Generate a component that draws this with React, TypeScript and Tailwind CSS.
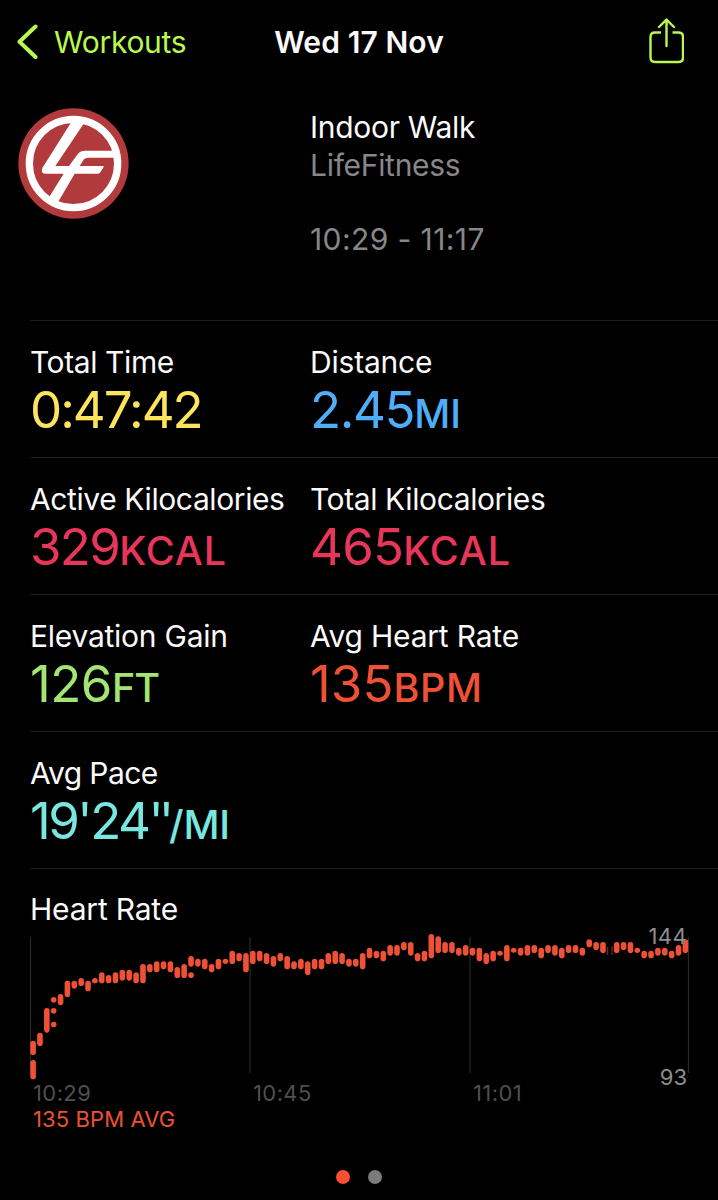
import type { ReactNode } from "react";

// [slot, top, bottom], three units to a pixel
const BARS: [number, number, number][] = [
  [0, 362, 405], [0, 420, 478], [1, 338, 378], [2, 264, 338], [3, 231, 248], [3, 264, 281], [3, 305, 322],
  [4, 222, 255], [5, 182, 231], [6, 182, 206], [7, 174, 198], [8, 182, 214], [9, 174, 190], [10, 157, 190],
  [11, 165, 190], [12, 157, 190], [13, 149, 182], [14, 149, 182], [15, 157, 190], [16, 132, 190], [17, 132, 157],
  [18, 124, 157], [19, 124, 148], [20, 124, 157], [21, 141, 174], [22, 132, 174], [23, 108, 140], [23, 157, 174],
  [24, 116, 140], [25, 116, 148], [26, 132, 157], [27, 116, 148], [28, 116, 132], [29, 92, 132], [30, 99, 124],
  [31, 99, 157], [32, 92, 132], [33, 92, 124], [34, 99, 132], [35, 108, 140], [36, 99, 124], [37, 108, 148],
  [38, 124, 148], [39, 116, 148], [40, 124, 165], [41, 116, 148], [42, 116, 148], [43, 99, 132], [44, 92, 132],
  [45, 99, 132], [46, 116, 140], [47, 116, 140], [48, 99, 148], [49, 83, 115], [50, 92, 115], [51, 92, 124],
  [52, 75, 107], [53, 75, 107], [54, 66, 91], [55, 66, 107], [56, 99, 124], [57, 92, 124], [58, 42, 115],
  [59, 49, 99], [60, 66, 99], [61, 66, 99], [62, 83, 107], [63, 75, 107], [64, 83, 107], [65, 83, 124],
  [66, 99, 132], [67, 92, 124], [68, 92, 107], [69, 75, 124], [70, 83, 98], [71, 83, 107], [72, 75, 107],
  [73, 75, 99], [74, 83, 115], [75, 75, 99], [76, 75, 107], [77, 83, 115], [78, 75, 99], [79, 75, 99],
  [80, 83, 107], [81, 58, 82], [82, 66, 90], [83, 66, 99], [85, 66, 99], [86, 66, 90], [87, 66, 99],
  [88, 83, 99], [89, 92, 115], [90, 92, 115], [91, 83, 107], [92, 83, 107], [93, 92, 115], [94, 75, 107],
  [95, 58, 99],
];

function Logo() {
  return (
    <svg className="w-[111px] h-[111px]" viewBox="55 323 333 333">
      <circle cx="221.5" cy="489.5" r="165.5" fill="#b13a3c" />
      <circle cx="221.5" cy="489.5" r="132.5" fill="none" stroke="#fff" strokeWidth="22" />
      <path fill="#fff" d="M215 365L128 503Q122 520 137 520H192L149 589L174 607L225 520H294Q299 520 301 517L312 500Q314 497 309 497H240L253 477Q257 472 265 472H346V451H255Q242 451 235 460L208 497H167L252 370Z" />
    </svg>
  );
}

interface MetricProps {
  label: string;
  value: ReactNode;
  unit?: string;
  color: string;
  labelSpacing?: string;
  spacing?: string;
  unitSpacing?: string;
}

function Metric({ label, value, unit, color, labelSpacing = "tracking-[-0.4px]", spacing = "tracking-[-2px]", unitSpacing = "tracking-[0.9px]" }: MetricProps) {
  return (
    <div className="whitespace-nowrap">
      <div className={`text-[30px] leading-9 ${labelSpacing}`}>{label}</div>
      <div className={`text-[51px] leading-[59px] ${color}`}>
        <span className={spacing}>{value}</span>
        {unit && <span className={`text-[39.5px] font-medium ${unitSpacing}`}>{unit}</span>}
      </div>
    </div>
  );
}

function Row({ children }: { children: ReactNode }) {
  return (
    <div className="ml-[30px] h-[137px] border-t border-[#1d1d1e] pt-[23px] grid grid-cols-[280px_1fr]">
      {children}
    </div>
  );
}

function HeartRateChart() {
  return (
    <div className="relative h-[150px]">
      <svg className="block w-[718px] h-[150px]" viewBox="0 0 718 150">
        {[30.5, 250, 470, 688.5].map(x => (
          <line key={x} x1={x} x2={x} y1="7" y2="143" stroke="#29292a" strokeWidth="1.2" />
        ))}
        {BARS.map(([slot, top, bottom]) => (
          <rect key={`${slot}-${top}`} x={33.1 + slot * 6.866 - 2.8} y={top / 3 - 10} width="5.6" height={(bottom - top) / 3} rx="2.8" fill="#ee5136" />
        ))}
        <path d="M607.7 17V25M612 16V25" stroke="#8c3020" strokeWidth="1" />
      </svg>
      <div className="absolute right-[31px] -top-[6px] text-[22px] leading-6 tracking-[0.4px] text-[#8e8e92]">144</div>
      <div className="absolute right-[31px] top-[135px] text-[22px] leading-6 text-[#8e8e92]">93</div>
    </div>
  );
}

export default function App() {
  return (
    <div className="w-[718px] h-[1200px] bg-black text-[#fafafa] overflow-hidden font-['Inter',sans-serif] font-normal flex flex-col">
      <header className="h-[84px] shrink-0 grid grid-cols-[1fr_auto_1fr] items-center text-[30px] leading-9">
        <div className="flex items-center pl-4 gap-[14px] text-[#b9f84f]">
          <svg className="w-6 h-9" viewBox="16 24 24 36" fill="none" stroke="currentColor" strokeWidth="4" strokeLinecap="round" strokeLinejoin="round">
            <path d="M35.5 26.5L19.5 41.8L35.5 57" />
          </svg>
          <span className="tracking-[-0.3px]">Workouts</span>
        </div>
        <h1 className="font-semibold tracking-[0.1px]">Wed 17 Nov</h1>
        <svg className="w-9 h-[46px] justify-self-end mr-[34px] -mt-[2px]" viewBox="648 18 36 46" fill="none" stroke="#b9f84f" strokeWidth="2.4" strokeLinecap="round" strokeLinejoin="round">
          <path strokeLinecap="butt" d="M661 32.5H655Q650.5 32.5 650.5 37V57.5Q650.5 62 655 62H678.5Q683 62 683 57.5V37Q683 32.5 678.5 32.5H672.5" />
          <path d="M666.5 46V20M659 27L666.5 19.6L674 27" />
        </svg>
      </header>

      <section className="h-[236px] shrink-0 pt-6 flex">
        <div className="w-[310px] pl-[18px]">
          <Logo />
        </div>
        <div className="pt-px text-[30px] leading-[37.5px] tracking-[-0.3px] text-[#87878a]">
          <div className="text-[#fafafa]">Indoor Walk</div>
          <div>LifeFitness</div>
          <div className="mt-[37px] tracking-[0.4px]">10:29 - 11:17</div>
        </div>
      </section>

      <Row>
        <Metric label="Total Time" value="0:47:42" color="text-[#fce55c]" />
        <Metric label="Distance" value="2.45" unit="MI" color="text-[#50adf7]" labelSpacing="tracking-[-0.2px]" spacing="tracking-[-1.4px]" unitSpacing="tracking-[0px]" />
      </Row>
      <Row>
        <Metric label="Active Kilocalories" value="329" unit="KCAL" color="text-[#e8365b]" spacing="tracking-[-1.7px]" />
        <Metric label="Total Kilocalories" value="465" unit="KCAL" color="text-[#e8365b]" spacing="tracking-[-0.8px]" />
      </Row>
      <Row>
        <Metric label="Elevation Gain" value="126" unit="FT" color="text-[#a3e572]" labelSpacing="tracking-[-0.25px]" spacing="tracking-[-0.5px]" unitSpacing="tracking-[-1px]" />
        <Metric label="Avg Heart Rate" value="135" unit="BPM" color="text-[#ee5136]" labelSpacing="tracking-[-0.2px]" spacing="tracking-[0.1px]" unitSpacing="tracking-[0.6px]" />
      </Row>
      <Row>
        <Metric
          label="Avg Pace"
          value={<>19'24<span className="tracking-[-5px]">''</span></>}
          unit="/MI"
          color="text-[#79e6df]"
          labelSpacing="tracking-[-0.6px]"
          spacing="tracking-[-2.5px]"
          unitSpacing="tracking-[-0.2px]"
        />
      </Row>

      <section className="shrink-0">
        <div className="ml-[30px] h-[62px] border-t border-[#1d1d1e] pt-[22px] text-[30px] leading-9 tracking-[-0.2px]">Heart Rate</div>
        <HeartRateChart />
        <div className="pl-[33px] grid grid-cols-[220px_220px_1fr] text-[22px] leading-[26px] text-[#4f4f51] tracking-[0.4px]">
          <span>10:29</span>
          <span>10:45</span>
          <span>11:01</span>
        </div>
        <div className="pl-[33px] text-[22px] leading-[26px] tracking-[0.1px] text-[#ee5136]">135 BPM AVG</div>
      </section>

      <div className="mt-[38px] flex justify-center gap-[18px]">
        <span className="size-[14px] rounded-full bg-[#fa5032]" />
        <span className="size-[14px] rounded-full bg-[#7b7b7b]" />
      </div>
    </div>
  );
}
